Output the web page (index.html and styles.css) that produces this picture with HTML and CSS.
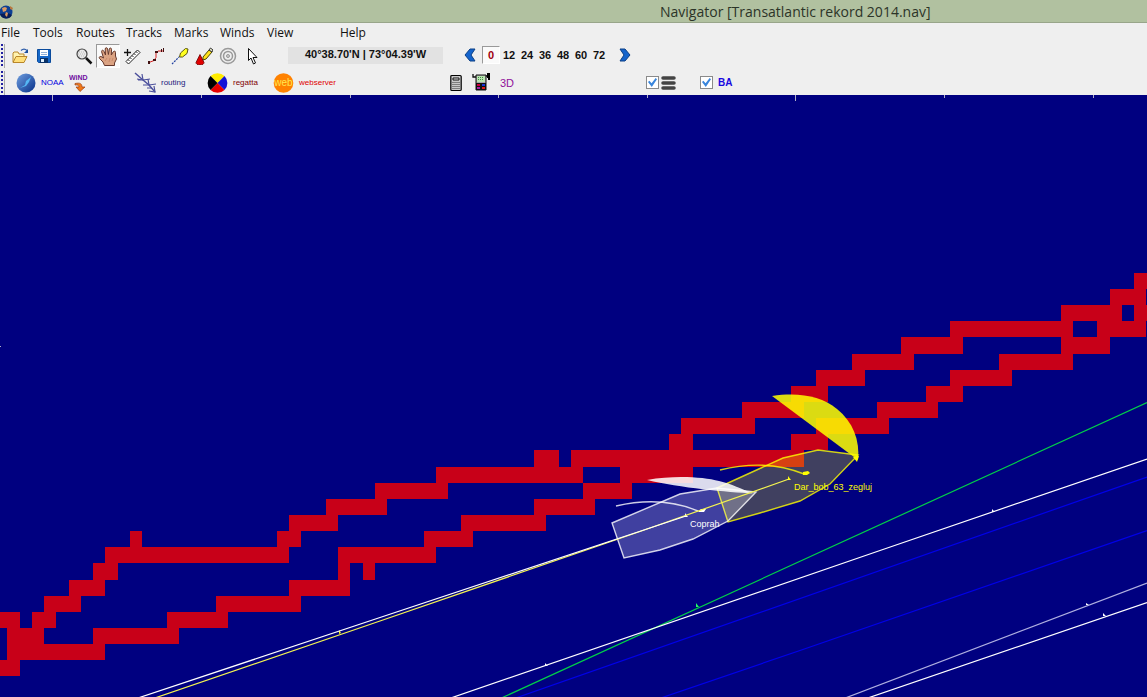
FILE: index.html
```html
<!DOCTYPE html>
<html lang="en">
<head>
<meta charset="utf-8">
<title>Navigator [Transatlantic rekord 2014.nav]</title>
<link rel="stylesheet" href="styles.css">
</head>
<body>
<header class="titlebar">
  <svg class="app-icon" viewBox="0 0 14 18" width="14" height="18" aria-hidden="true">
    <circle cx="6" cy="9" r="6.500" fill="#0c3f94"/><path d="M0 11a6.500 6.500 0 0 0 12 1l-4-2z" fill="#061c58"/>
    <path d="M2 5l3-1 2 1-1 3-3 1zM6 9l2 1-1 4-2-2z" fill="#d99a62"/><path d="M10 3l3 2-1 2-2-1z" fill="#b8773f"/>
  </svg>
  <h1 class="title">Navigator [Transatlantic rekord 2014.nav]</h1>
</header>

<nav class="menu" aria-label="Main menu">
  <button type="button">File</button><button type="button">Tools</button><button type="button">Routes</button><button type="button">Tracks</button><button type="button">Marks</button><button type="button">Winds</button><button type="button">View</button><button type="button">Help</button>
</nav>

<div class="toolbar" role="toolbar" aria-label="Standard">
  <span class="grip"></span>
  <div class="group">
    <button type="button" class="tool" aria-label="Open"><svg width="18" height="18" viewBox="0 0 18 18"><path d="M2 15V6l1-1h4l1 2h5v3" fill="#fff3b0" stroke="#b8862a"/><path d="M2 15.500l3-6h11l-3 6z" fill="#ffdf7a" stroke="#b8862a"/><path d="M10 3.500c2-2 4-2 6 0" fill="none" stroke="#2c5ca8" stroke-width="1.200"/><path d="M17 2v4h-4z" fill="#1c4f9c"/></svg></button>
    <button type="button" class="tool" aria-label="Save"><svg width="16" height="16" viewBox="0 0 16 16"><path d="M1.500 1.500h13v13h-12l-1-1z" fill="#1668c8" stroke="#0a4a9c"/><path d="M4 2h8v6H4z" fill="#fff"/><path d="M5 4.500h6M5 6.500h6" stroke="#90b0d8"/><path d="M4 10h8v5H4z" fill="#0a3268"/><path d="M5 11h3v3H5z" fill="#dff0ff"/></svg></button>
  </div>
  <div class="group group-tools">
    <button type="button" class="tool" aria-label="Zoom"><svg width="18" height="18" viewBox="0 0 18 18"><circle cx="7" cy="7" r="5" fill="#e9e9e9" stroke="#444" stroke-width="1.200"/><path d="M4 5h6M3 7h8M4 9h6" stroke="#bbb" stroke-dasharray="1 1"/><path d="M11 11l5.500 5.500" stroke="#111" stroke-width="2.500"/></svg></button>
    <button type="button" class="tool pressed" aria-label="Pan" aria-pressed="true"><svg width="20" height="20" viewBox="0 0 20 20"><path d="M6.500 19.500L5 16 1.500 12.500C.5 10.500 2.500 10 4 11l1.500 1L3.700 6C3.200 4 5.200 3.500 6 5.400l1.500 3.600L7.200 3C7.200 1.300 9.300 1.300 9.600 3l.8 5.500.9-5.500c.3-1.500 2.200-1.300 2.200.3L13.300 9l2-3.300c.8-1.300 2.500-.5 2.200 1L17.500 10l1 3-2 4v2.500z" fill="#dba383" stroke="#65382c"/><path d="M9 12l-2 3M12 12l-1 4M15 12l-1 3" stroke="#c98a6b"/></svg></button>
    <button type="button" class="tool" aria-label="Measure"><svg width="18" height="18" viewBox="0 0 18 18"><path d="M3 14.500L14.500 3l2.500 2.500L5.500 17z" fill="#fff" stroke="#222"/><path d="M5 12.500l1.500 1.500M7 10.500L8.500 12M9 8.500l1.500 1.500M11 6.500L12.500 8M13 4.500L14.500 6" stroke="#222"/><path d="M1 5.500h7M4.500 2v7" stroke="#111" stroke-width="1.300"/></svg></button>
    <button type="button" class="tool" aria-label="Route"><svg width="18" height="18" viewBox="0 0 18 18"><path d="M2 15.500l5-2 2-3V6l2-2h5" fill="none" stroke="#d82020"/><path d="M1 14h2v3H1zM6 12h3v2H6zM8 4h3v2H8zM14 2h1v3h-1zM16 1h1v4h-1z" fill="#401010"/></svg></button>
    <button type="button" class="tool" aria-label="Mark"><svg width="18" height="18" viewBox="0 0 18 18"><path d="M1 17l7-7" stroke="#2040a0" stroke-width="1.200" stroke-dasharray="2 1"/><path d="M8.500 10l1-4 5-4.500 2.500.5-1 4.500-4.500 3.500z" fill="#ffff20" stroke="#5c5810"/></svg></button>
    <button type="button" class="tool" aria-label="Draw"><svg width="18" height="18" viewBox="0 0 18 18"><path d="M8 10l6-7 3 2-6 7-3 1z" fill="#ffe11b" stroke="#4d4600"/><path d="M14 3l1.500-2L18 3l-1 2z" fill="#e5e5c8" stroke="#333"/><path d="M5 7.500L1 15.500C1 17 2.500 18 5 18s4-1 4-2.500z" fill="#e00000" stroke="#640000" stroke-width=".8"/></svg></button>
    <button type="button" class="tool" aria-label="Range rings"><svg width="18" height="18" viewBox="0 0 18 18" fill="none" stroke="#999"><circle cx="9" cy="9" r="7.500" stroke-width="1.500"/><circle cx="9" cy="9" r="4.500" stroke-width="1.500"/><circle cx="9" cy="9" r="1.500" fill="#ccc"/></svg></button>
    <button type="button" class="tool" aria-label="Select"><svg width="14" height="18" viewBox="0 0 14 18"><path d="M3.500 1.500v12l2.500-2.500 2.500 6 2-1-2.500-5.500h4z" fill="#fff" stroke="#111"/></svg></button>
  </div>
  <output class="readout">40°38.70'N | 73°04.39'W</output>
  <div class="group group-hours">
    <button type="button" class="tool" aria-label="Earlier"><svg width="12" height="14" viewBox="0 0 12 14"><path d="M6 1h5L7 7l4 6H6L1 7z" fill="#1464cc" stroke="#0c4086"/></svg></button>
    <button type="button" class="hour current">0</button><button type="button" class="hour">12</button><button type="button" class="hour">24</button><button type="button" class="hour">36</button><button type="button" class="hour">48</button><button type="button" class="hour">60</button><button type="button" class="hour">72</button>
    <button type="button" class="tool later" aria-label="Later"><svg width="12" height="14" viewBox="0 0 12 14"><path d="M6 1H1l4 6-4 6h5l5-6z" fill="#1464cc" stroke="#0c4086"/></svg></button>
  </div>
</div>

<div class="toolbar toolbar-services" role="toolbar" aria-label="Services">
  <span class="grip"></span>
  <button type="button" class="service noaa"><svg width="20" height="20" viewBox="0 0 20 20"><defs><linearGradient id="sea" x2="1" y2="1"><stop stop-color="#6f9fe0"/><stop offset="1" stop-color="#062f88"/></linearGradient></defs><circle cx="10" cy="10" r="9.500" fill="url(#sea)"/><path d="M4 15l5-3 1-4 5-4-2 5-3 4z" fill="#55b7f5"/></svg>NOAA</button>
  <button type="button" class="service wind"><svg width="22" height="20" viewBox="0 0 22 20"><text x="0" y="7" class="wind-word">WiND</text><path d="M6 10.500c5-1 7 0 7 3.500h3l-5 4.500-4-4.500h3c0-1.500-1-2.500-4-2z" fill="#f07818" stroke="#9c3c10" stroke-width=".7"/></svg></button>
  <button type="button" class="service routing"><svg width="24" height="22" viewBox="0 0 24 22" fill="none" stroke="#4c509c"><path d="M1 1l8 7 6 5 6 7" stroke-width="1.500"/><path d="M3 7l6 1-1-6M9 8l7-1M9 8h-5M9 13l6 0-1-6M15 13l7-1M15 19l6 1-1-6M13 16l5 0" stroke-width="1.200"/></svg>routing</button>
  <button type="button" class="service regatta"><svg width="21" height="20" viewBox="0 0 20 20"><path d="M10 10L3 3a10 10 0 0 1 14 0z" fill="#ffeb00"/><path d="M10 10l7-7a10 10 0 0 1 0 14z" fill="#1212d8"/><path d="M10 10l7 7a10 10 0 0 1-14 0z" fill="#e80000"/><path d="M10 10l-7 7A10 10 0 0 1 3 3z"/></svg>regatta</button>
  <button type="button" class="service web"><svg width="21" height="20" viewBox="0 0 21 20"><circle cx="10.500" cy="10" r="9.800" fill="#ff8200"/><text x="10.500" y="13" class="web-word">web</text></svg>webserver</button>
  <button type="button" class="tool" aria-label="Calculator"><svg width="12" height="18" viewBox="0 0 12 18"><rect x=".8" y="1.500" width="10.400" height="15" rx="1" fill="#c9c9c9" stroke="#000" stroke-width="1.200"/><path d="M3 4h6v2H3z" fill="#eee" stroke="#111"/><path d="M2.500 8.500h7M2.500 10.500h7M2.500 12.500h7M2.500 14.500h7" stroke="#333" stroke-dasharray="1 1"/></svg></button>
  <button type="button" class="tool" aria-label="GPS"><svg width="20" height="19" viewBox="0 0 20 19"><path d="M5 2h10v15H5z" fill="#a9a9a9" stroke="#111"/><path d="M6 3h8v6H6z" fill="#b9e5b0"/><path d="M7 4.500h6M7 6.500h6" stroke="#438b45" stroke-dasharray="1 1"/><path d="M5 10h10v7H5z" fill="#111"/><path d="M6 11h3v2H6z" fill="#d0003a"/><path d="M11 11h3v2h-3z" fill="#1537d8"/><path d="M6 14h3v2H6z" fill="#a622aa"/><path d="M11 14h3v2h-3z" fill="#e01818"/><path d="M5 4H2V1M15 3h3" fill="none" stroke="#111" stroke-width="1.300"/><path d="M16 0h3v7h-2V5h-1z"/></svg></button>
  <button type="button" class="service three-d">3D</button>
  <label class="check"><input type="checkbox" checked aria-label="Show layers"><svg class="bars" width="16" height="16" viewBox="0 0 16 16"><path d="M2 3h11M2 8h11M2 13h11" stroke="#444" stroke-width="3.500" stroke-linecap="round"/></svg></label>
  <label class="check check-ba"><input type="checkbox" checked>BA</label>
</div>

<main class="chart">
  <svg class="map" viewBox="0 95 1147 602" preserveAspectRatio="xMinYMin slice" role="img" aria-label="Chart with boat tracks">
    <path class="ticks" d="M52.500 95v6M201.500 95v3M350.500 95v3M498.500 95v3M647.500 95v3M795.500 95v6M944.500 95v3M1093.500 95v3M0 346.500h1"/>
    <path class="land" d="M1134 273h14v16h-14zM1110 289h36v16h-36zM1061 305h61v16h-61zM1134 305h14v16h-14zM950 321h123v16h-123zM1097 321h49v16h-49zM901 337h62v17h-62zM1061 337h49v17h-49zM852 354h62v16h-62zM999 354h74v16h-74zM816 370h49v16h-49zM950 370h62v16h-62zM791 386h37v16h-37zM926 386h37v16h-37zM742 402h62v16h-62zM877 402h61v16h-61zM681 418h74v16h-74zM816 418h73v16h-73zM669 434h24v16h-24zM791 434h37v16h-37zM534 450h25v17h-25zM571 450h233v17h-233zM436 467h147v16h-147zM620 467h73v16h-73zM375 483h73v16h-73zM583 483h49v16h-49zM326 499h61v16h-61zM534 499h61v16h-61zM289 515h49v16h-49zM461 515h85v16h-85zM130 531h12v16h-12zM277 531h24v16h-24zM424 531h49v16h-49zM105 547h184v16h-184zM338 547h98v16h-98zM93 563h25v17h-25zM338 563h12v17h-12zM363 563h12v17h-12zM69 580h36v16h-36zM289 580h61v16h-61zM44 596h37v16h-37zM216 596h85v16h-85zM0 612h20v16h-20zM32 612h24v16h-24zM167 612h61v16h-61zM7 628h37v16h-37zM93 628h86v16h-86zM7 644h98v16h-98zM0 660h20v16h-20z"/>
    <g class="tracks">
      <path class="track-blue" d="M510 700L1147 477M655 700L800 650.500 1147 530.500"/>
      <path class="track-green" d="M497 700L1147 402.500"/>
      <path class="track-white" d="M445 700L880 550.500 1147 459M862 700L1147 602.500"/>
      <path class="track-lavender" d="M840 700L1147 583"/>
    </g>
    <g class="boat boat-yellow">
      <path class="hull" d="M717 488L783 458 818 450 858 455 830 484 800 501 760 513 728 522z"/>
      <path class="sail" d="M772 396C799 392 821 396 837 409C853 422 860 440 858 460z"/>
      <path class="boom" d="M720 470C748 463 777 463 804 474"/>
      <path class="fill" d="M853 457l6-1-2 6zM803 475v-3l5-1 2 2-3 2zM788 476l3 4h-3zM339 630l2 3-2 1z"/>
    </g>
    <g class="boat boat-white">
      <path class="hull" d="M612 523L680 494 717 488 756 492 728 521 693 539 660 550 624 558z"/>
      <path class="sail" d="M647 480C675 475 703 477 719 481C732 484 741 489 753 493.500C728 492 680 488 647 480z"/>
      <path class="boom" d="M616 506C642 500 672 500 698 511"/>
      <path class="fill" d="M698 512l3-3 5 0-2 3zM685 513l3 4h-3z"/>
    </g>
    <path class="track-yellow" d="M149 700L380 621 640 531.500 789 479"/>
    <path class="track-white" d="M132 700L380 617.500 686 516"/>
    <path class="mark-white" d="M545 663l3 3h-3zM992 509l3 3h-3zM1103 613l3 3h-3zM1086 603l3 2h-3z"/>
    <path class="mark-green" d="M696 603l3 4h-3z"/>
    <text x="690" y="527" class="name name-white">Coprah</text>
    <text x="794" y="490" class="name name-yellow">Dar_bob_63_zegluj</text>
  </svg>
</main>
</body>
</html>
```
FILE: styles.css
```css
* { box-sizing: border-box; }

body {
  margin: 0;
  min-height: 100vh;
  display: flex;
  flex-direction: column;
  background: #efefef;
  color: #111;
  font-family: "Open Sans", "Noto Sans", sans-serif;
  overflow-x: hidden;
}

button {
  margin: 0;
  padding: 0;
  border: 0;
  background: none;
  color: inherit;
  font: inherit;
  white-space: nowrap;
}

svg { display: block; flex: none; }

.titlebar {
  display: flex;
  align-items: center;
  height: 23px;
  padding-top: 1px;
  background: #b1c1a0;
  border-bottom: 1px solid #98a58a;
}

.title {
  margin: 0 0 0 646px;
  font-size: 14px;
  line-height: 21px;
  font-weight: 400;
  color: #2c3428;
  white-space: nowrap;
}

.menu {
  display: grid;
  grid-template-columns: 32px 43px 50px 48px 46px 47px 73px auto;
  justify-content: start;
  padding-left: 1px;
  height: 20px;
  font-size: 12px;
  line-height: 20px;
}

.menu button { text-align: left; }

.toolbar {
  display: flex;
  align-items: center;
  height: 26px;
}

.grip {
  width: 5px;
  height: 24px;
  margin-right: 3px;
  border-right: 1px solid #aaa;
  background: radial-gradient(circle at 1px 1px, #2020a0 1px, transparent 1px) 1px 0 / 2px 4px repeat-y;
}

.group { display: flex; align-items: center; }
.group-tools { margin-left: 16px; }
.group-hours { margin: 0 0 3px 15px; }

.tool {
  display: flex;
  align-items: center;
  justify-content: center;
  width: 24px;
  height: 24px;
}

.pressed, .current {
  background: #fafafa;
  border: 1px solid;
  border-color: #999 #fff #fff #999;
}

.readout {
  width: 155px;
  height: 17px;
  margin: 0 0 2px 24px;
  background: #e2e2e2;
  font: bold 11px/15px "Liberation Sans", sans-serif;
  text-align: center;
}

.hour {
  width: 18px;
  height: 18px;
  font: bold 11px/16px "Liberation Sans", sans-serif;
  text-align: center;
}

.hour.current { color: #a00010; }
.later { margin-left: 5px; }

.toolbar-services {
  display: grid;
  grid-template-columns: 16px 53px 65px 73px 66px 171px 25px 31px 146px 54px auto;
  justify-content: start;
  padding-top: 1px;
}

.service {
  display: flex;
  align-items: center;
  gap: 5px;
  font: 8px/12px "Liberation Sans", sans-serif;
}

.noaa { color: #0000e0; }
.routing { color: #20207c; gap: 3px; }
.regatta { color: #800000; }
.web { color: #e00000; }
.three-d { font-size: 11px; color: #90109a; }

.wind-word { font: bold 7px "Liberation Sans", sans-serif; fill: #7010a0; }
.web-word { font: 10px "Liberation Sans", sans-serif; fill: #ffe850; text-anchor: middle; }

.check { display: flex; align-items: center; gap: 2px; }

.check input {
  appearance: none;
  display: grid;
  place-items: center;
  width: 13px;
  height: 13px;
  margin: 0;
  border: 1px solid #8a8a8a;
  background: #fff;
}

.check input:checked::before {
  content: "";
  width: 9px;
  height: 9px;
  background: #3a86dc;
  clip-path: polygon(0 45%, 15% 30%, 40% 58%, 85% 0, 100% 15%, 42% 100%);
}

.check-ba {
  gap: 5px;
  font: bold 10px/14px "Liberation Sans", sans-serif;
  color: #1808e0;
}

.chart {
  flex: 1;
  min-height: 0;
  display: flex;
  background: #000080;
}

.map { flex: 1; width: 100%; min-width: 0; }

.ticks { fill: none; stroke: #b0b0c8; }
.land { fill: #c80018; shape-rendering: crispEdges; }
.tracks, .track-yellow, .track-white { fill: none; stroke-width: 1.2; }
.track-blue { stroke: #0000e8; stroke-width: 1.2; }
.track-green { stroke: #00d048; }
.track-white { stroke: #fff; }
.track-lavender { stroke: #b0b0e0; }
.track-yellow { stroke: #f4f450; }
.mark-white { fill: #fff; }
.mark-green { fill: #20ff60; }

.boat { stroke-width: 1.4; }
.hull { fill-opacity: .25; stroke-opacity: .8; }
.sail { fill-opacity: .86; stroke: none; }
.boom { stroke-opacity: .8; }
.fill { stroke: none; }
.boat-yellow { fill: #ff0; stroke: #ff0; }
.boat-white { fill: #fff; stroke: #fff; }
.boat .boom { fill: none; }

.name { font: 9px "Liberation Sans", sans-serif; }
.name-white { fill: #fff; }
.name-yellow { fill: #ff0; }
```
